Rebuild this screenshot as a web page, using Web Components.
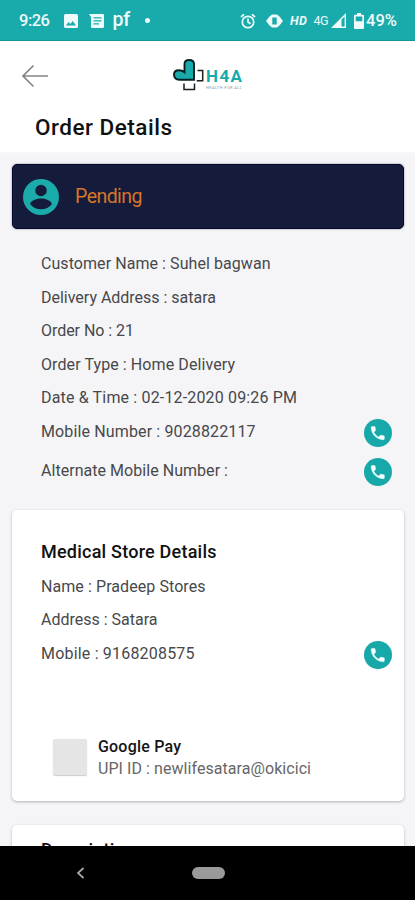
<!DOCTYPE html>
<html lang="en"><head><meta charset="utf-8"><title>Order Details</title>
<style>html,body{margin:0;height:100%;background:#f5f5f8;overflow:hidden;font-family:Roboto,"Liberation Sans",sans-serif}</style></head>
<body><order-screen></order-screen>
<script>
const define=(name,html,ready)=>customElements.define(name,class extends HTMLElement{
  connectedCallback(){
    if(this.shadowRoot)return;
    const t=document.createElement('template');t.innerHTML=html;
    this.attachShadow({mode:'open'}).append(t.content.cloneNode(true));
    if(ready)ready(this);
  }
});

/* Single-line label whose tracking is adjusted to fill the width in "w". */
define('fit-text',`<style>:host{display:block;white-space:pre}span{display:inline-block}</style><span><slot></slot></span>`,el=>{
  const s=el.shadowRoot.querySelector('span'),w=+el.getAttribute('w');
  const n=el.textContent.length,cur=s.getBoundingClientRect().width;
  if(w)s.style.letterSpacing=((w-cur)/(n-1)).toFixed(3)+'px';
});

define('status-bar',`<style>
:host{display:flex;height:41px;box-sizing:border-box;background:#19abac;color:#effafa;align-items:center;padding:1px 18px 0 19px;border-bottom:1px solid #13989a;font-weight:500;font-size:16.5px}
svg{display:block;fill:#effafa;flex:none}
.sp{flex:1}.pf{margin-left:9px;font-size:19.5px;line-height:20px;margin-top:-2px}
.hd{font-style:italic;font-weight:700;font-size:12.5px;margin-left:7px}.g{font-size:12.5px;font-weight:400;margin-left:6px}
.dot{width:5px;height:5px;border-radius:50%;background:#effafa;margin-left:15px}
</style>
<fit-text w="31">9:26</fit-text>
<svg style="margin-left:14px" width="14" height="14" viewBox="0 0 14 14"><path fill-rule="evenodd" d="M1.500 0h11A1.500 1.500 0 0 1 14 1.500v11a1.500 1.500 0 0 1-1.500 1.500h-11A1.500 1.500 0 0 1 0 12.500v-11A1.500 1.500 0 0 1 1.500 0zM2 11.500h10L8.700 7 6.300 10 4.600 8z"/></svg>
<svg style="margin-left:11px" width="15" height="14" viewBox="0 0 15 14"><path fill-rule="evenodd" d="M0 0h13.700Q15 0 15 1.300v11.400Q15 14 13.700 14H3.300Q2 14 2 12.700V3zM4.500 3.200v1.200h8V3.200zm0 3v1.200h8V6.200zm0 3v1.200h5.500V9.200z"/></svg>
<fit-text class="pf" w="17.500">pf</fit-text><div class="dot"></div><div class="sp"></div>
<svg width="16" height="16" viewBox="0 0 16 16"><g fill="none" stroke="#effafa" stroke-width="1.700"><circle cx="8" cy="9" r="5.700"/><path d="M8 5.500V9l2.500 1.800M1 4l3-2.700M15 4l-3-2.700"/></g></svg>
<svg style="margin-left:10px" width="17" height="14" viewBox="0 0 17 14"><path fill-rule="evenodd" d="M0 7l3.500-4.500L5 1.500Q5.300.500 6.300.500h4.400q1 0 1.300 1l1.500 1L17 7l-3.500 4.500-1.500 1q-.3 1-1.300 1H6.300q-1 0-1.300-1l-1.500-1zM6.300 3.500v7h4.400v-7z"/></svg>
<fit-text class="hd" w="17">HD</fit-text><fit-text class="g" w="15">4G</fit-text>
<svg style="margin-left:3px" width="15" height="15" viewBox="0 0 15 15"><path fill-rule="evenodd" d="M15 0v15H0zM13.600 3.500 10.500 6.500v7.100h3.100z"/></svg>
<svg style="margin-left:8px" width="10" height="16" viewBox="0 0 10 16"><path fill-rule="evenodd" d="M3 0h4v1.700h2q1 0 1 1V15q0 1-1 1H1q-1 0-1-1V2.700q0-1 1-1h2zM1.700 3.500v4.800h6.600V3.500z"/></svg>
<fit-text style="margin-left:2px" w="31">49%</fit-text>`);

define('brand-logo',`<style>:host{display:flex;align-items:flex-start;width:70px;height:34px}
.t{color:#18a9aa;font-weight:700;font-size:17px;line-height:16px;padding-top:9px}
.s{color:#8b9a9b;font-size:4px;line-height:5px;margin-top:1px}svg{flex:none}</style>
<svg width="33" height="32" viewBox="0 0 33 32"><path d="M11.500 5q0-4 4.500-4 5 0 5 4v15.800H6.500Q1 20.500 1 15.500 1 11.200 6 11.200q3.200 0 5.500 2z" fill="#19aaaa" stroke="#071f22" stroke-width="1.900"/><path d="M24.500 11.500h5.200v10.300h-6M11 24.500v6h10.500v-6" fill="none" stroke="#1d1d20" stroke-width="1.500"/></svg>
<div><fit-text class="t" w="36">H4A</fit-text><fit-text class="s" w="36">HEALTH FOR ALL</fit-text></div>`);

define('page-header',`<style>:host{display:block;height:112px;box-sizing:border-box;background:#fff;padding:18px 22px 0;border-bottom:1px solid #f8f8f9}
.bar{display:grid;grid-template-columns:151px 70px;height:34px}.bar svg{margin-top:5px}
.h{font-size:22.500px;font-weight:500;line-height:26px;color:#111;margin:20.500px 0 0 13px}</style>
<div class="bar"><svg width="27" height="24" viewBox="0 0 27 24"><path d="M11.500 1.500 1 12l10.500 10.500M1 12h25" fill="none" stroke="#858585" stroke-width="1.600"/></svg><brand-logo></brand-logo></div>
<fit-text class="h" w="137">Order Details</fit-text>`);

define('status-banner',`<style>:host{display:flex;align-items:center;height:65px;box-sizing:border-box;margin:0 11px 0 12px;background:#151b3a;border:1px solid #05082a;border-radius:5px;padding-left:10px;gap:16px;color:#d97528;font-size:19.500px;box-shadow:0 0 2px #777a8c}
svg{flex:none}fit-text{line-height:24px;margin-top:2px}</style>
<svg width="36" height="36" viewBox="2 2 20 20"><path fill="#1babaa" fill-rule="evenodd" d="M12 2a10 10 0 1 0 0 20 10 10 0 0 0 0-20zm0 3.200a3.200 3.200 0 1 1 0 6.400 3.200 3.200 0 0 1 0-6.400zM6 16c.03-2 4-3.100 6-3.100s5.970 1.100 6 3.100c-1.300 1.700-3.500 2.800-6 2.800S7.300 17.700 6 16z"/></svg><slot></slot>`);

define('call-button',`<style>:host{display:block;width:28px;height:28px;border-radius:50%;background:#17a9a9}svg{display:block}</style>
<svg width="28" height="28" viewBox="0 0 28 28"><path transform="translate(5 5.300) scale(.73)" fill="#f6ffff" stroke="#f6ffff" stroke-width=".6" stroke-linejoin="round" d="M6.620 10.790c1.440 2.830 3.760 5.140 6.590 6.590l2.200-2.200c.27-.27.67-.36 1.020-.24 1.120.37 2.330.57 3.570.57.55 0 1 .45 1 1V20c0 .55-.45 1-1 1-9.390 0-17-7.610-17-17 0-.55.45-1 1-1h3.500c.55 0 1 .45 1 1 0 1.250.2 2.450.57 3.570.11.35.03.74-.25 1.020l-2.200 2.200z"/></svg>`);

define('info-row',`<style>:host{display:flex;justify-content:space-between;height:33.5px;padding-right:12px;font-size:16px;line-height:33.5px;color:#48484b}
call-button{margin-top:4.500px}:host(:not([call])) call-button{display:none}</style><slot></slot><call-button></call-button>`);

define('info-card',`<style>:host{display:block;background:#fff;margin:0 11px 0 12px;box-sizing:border-box;border-radius:5px;box-shadow:0 1px 3px rgba(0,0,0,.28);padding-left:29px}</style><slot></slot>`);

define('payment-item',`<style>:host{display:flex;gap:11px;padding-left:12px}
.i{width:34px;height:36px;margin-top:4px;border-radius:2px;background:#e5e5e5;box-shadow:0 1px 1px #ccc}
.n{font-size:16px;line-height:22px;font-weight:500;color:#151515;margin-top:1px}.u{font-size:16px;line-height:22px;color:#666}</style>
<div class="i"></div><div><fit-text class="n" w="83">Google Pay</fit-text><fit-text class="u" w="213">UPI ID : newlifesatara@okicici</fit-text></div>`);

define('nav-bar',`<style>:host{display:grid;grid-template-columns:192px 33px;height:54px;background:#000;align-items:center}
svg{margin-left:76px}.p{height:12px;border-radius:6px;background:#9a9a9a}</style>
<svg width="9" height="12" viewBox="0 0 9 12"><path d="M7.500 1 2 6l5.500 5" fill="none" stroke="#aaa" stroke-width="1.700"/></svg><div class="p"></div>`);

define('order-screen',`<style>:host{display:flex;flex-direction:column;width:415px;height:900px}
main{flex:1;min-height:0;overflow:hidden;padding-top:11px}
.details{padding:18.250px 11px 0 41px}.alt{margin-top:5.500px}
.store{height:291px;margin-top:22.500px;padding-top:29px}
.title{font-size:18px;font-weight:500;line-height:26px;color:#111}
.store .title{margin-bottom:5px}
.pay{margin-top:65px}.desc{margin-top:24px;height:80px;padding-top:12px}</style>
<status-bar></status-bar><page-header></page-header>
<main><status-banner><fit-text w="67.500">Pending</fit-text></status-banner>
<section class="details">
<info-row><fit-text w="229.500">Customer Name : Suhel bagwan</fit-text></info-row>
<info-row><fit-text w="175">Delivery Address : satara</fit-text></info-row>
<info-row><fit-text w="93">Order No : 21</fit-text></info-row>
<info-row><fit-text w="194">Order Type : Home Delivery</fit-text></info-row>
<info-row><fit-text w="256">Date &amp; Time : 02-12-2020 09:26 PM</fit-text></info-row>
<info-row call><fit-text w="214.500">Mobile Number : 9028822117</fit-text></info-row>
<info-row call class="alt"><fit-text w="187">Alternate Mobile Number :</fit-text></info-row>
</section>
<info-card class="store"><fit-text class="title" w="175.500">Medical Store Details</fit-text>
<info-row><fit-text w="164.500">Name : Pradeep Stores</fit-text></info-row>
<info-row><fit-text w="116.500">Address : Satara</fit-text></info-row>
<info-row call><fit-text w="153.500">Mobile : 9168208575</fit-text></info-row>
<payment-item class="pay"></payment-item></info-card>
<info-card class="desc"><fit-text class="title" w="94">Description</fit-text></info-card></main>
<nav-bar></nav-bar>`);
</script></body></html>
